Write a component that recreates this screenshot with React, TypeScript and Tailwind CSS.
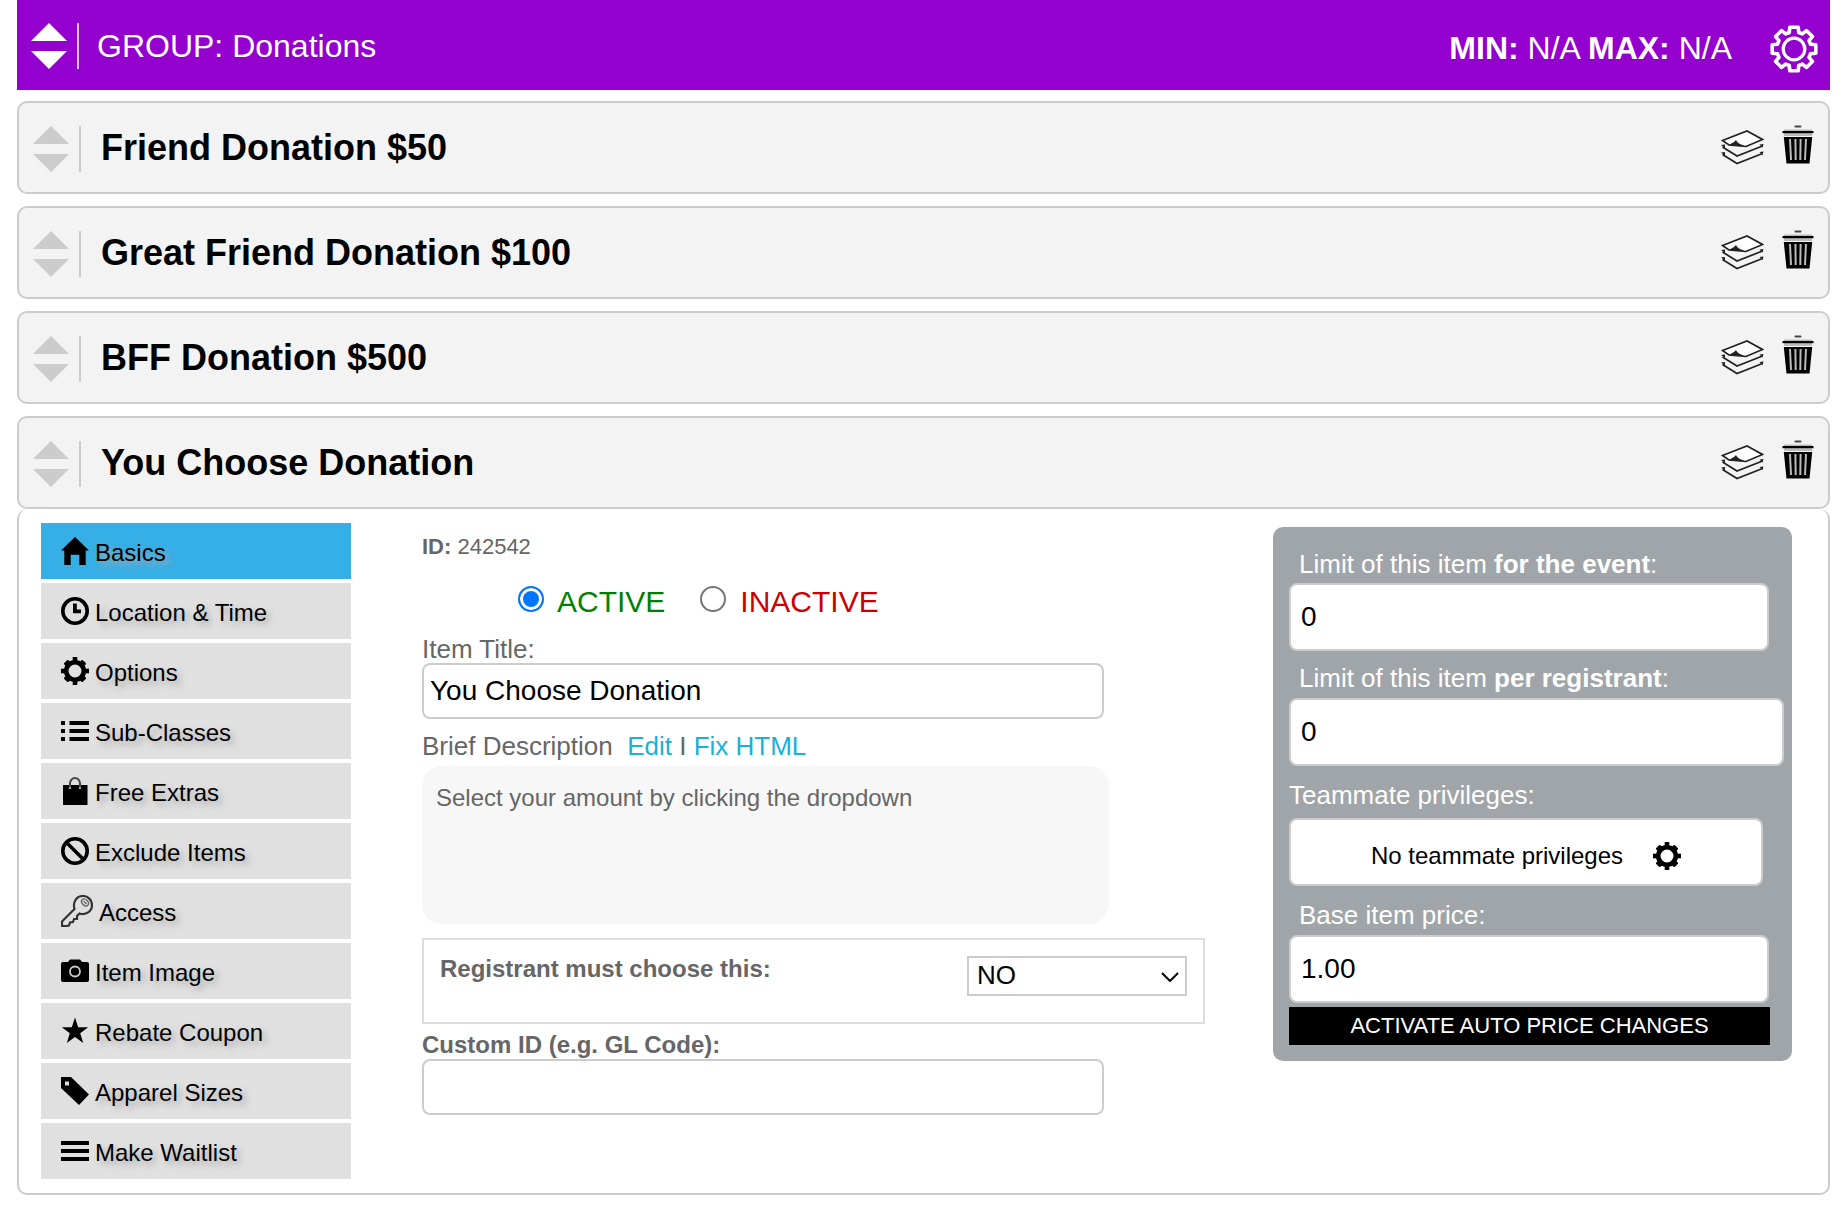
import { useState } from 'react';
import type { ReactNode } from 'react';

interface Tab {
  label: string;
  icon: ReactNode;
}

// Outline of the eight-toothed cog, centred on 0,0
const cogOutline = Array.from({ length: 8 }, (_, i) =>
  [[-16, 17.2], [-11, 22.2], [11, 22.2], [16, 17.2]].map(([deg, r]) => {
    const a = ((i * 45 + deg - 90) * Math.PI) / 180;
    return `${(Math.cos(a) * r).toFixed(2)},${(Math.sin(a) * r).toFixed(2)}`;
  }).join(' ')
).join(' ');

function CogOutlineIcon() {
  return (
    <svg viewBox="-24 -24 48 48" className="size-12" fill="none" stroke="white" strokeWidth="3.6" strokeLinejoin="round">
      <polygon points={cogOutline} />
      <circle r="10.8" strokeWidth="3.2" />
    </svg>
  );
}

function GearIcon() {
  return (
    <svg viewBox="0 0 28 28" className="size-7 shrink-0">
      <circle cx="14" cy="14" r="8.8" fill="none" stroke="black" strokeWidth="4.6" />
      {[0, 90, 180, 270].map((deg) => (
        <rect key={deg} x="11.7" y="0" width="4.6" height="5" transform={`rotate(${deg} 14 14)`} />
      ))}
      {[45, 135, 225, 315].map((deg) => (
        <rect key={deg} x="11" y="0.8" width="6" height="5" rx="1" transform={`rotate(${deg} 14 14)`} />
      ))}
    </svg>
  );
}

function LayersIcon() {
  return (
    <svg viewBox="0 0 43 35" className="h-[35px] w-[43px]" fill="none" stroke="#222" strokeWidth="1.7">
      <path d="M1.5 10.5 26 1l15.5 8.5L25 16.5 8 15z" fill="white" />
      <path d="M6.5 15c3.5-1 6.5-2.500 8.500-5 1 3 5 4.500 9.500 6.500z" fill="#222" stroke="none" />
      <path d="M1.500 17L16 26l25.500-10M1.500 24.500L16 33.500l25.500-10" />
      <path d="M0 15l4-.5v3.500zM0 22.500l4-.5v3.500zM42.500 14l-4 .5 3 3zM42.500 21.500l-4 .5 3 3z" fill="#222" stroke="none" />
    </svg>
  );
}

function TrashIcon() {
  return (
    <svg viewBox="0 0 32 39" className="h-[39px] w-8">
      <rect x="12.5" y="0.5" width="7" height="2" rx="1" fill="#444" />
      <rect x="2" y="4.5" width="28" height="6.5" fill="#bbb" />
      <rect x="0.5" y="6" width="31" height="2.2" />
      <path d="M1.8 12h28.4l-2.7 26.5h-23z" />
      <path d="M8 14l1 21M13.4 14l.3 21M18.600 14l-.3 21M24 14l-1 21" stroke="#bbb" strokeWidth="2" />
    </svg>
  );
}

function TabIcon({ children }: { children: ReactNode }) {
  return <svg viewBox="0 0 28 28" className="size-7 shrink-0">{children}</svg>;
}

const tabs: Tab[] = [
  {
    label: 'Basics',
    icon: <TabIcon><path d="M14 0l14 13.5h-3.3V28h-6.4V17.7H9.700V28H3.300V13.500H0z" /></TabIcon>,
  },
  {
    label: 'Location & Time',
    icon: (
      <TabIcon>
        <circle cx="14" cy="14" r="12.2" fill="none" stroke="black" strokeWidth="3.6" />
        <path d="M12 6.5h3.8v6H20v3.800h-8z" />
      </TabIcon>
    ),
  },
  { label: 'Options', icon: <GearIcon /> },
  {
    label: 'Sub-Classes',
    icon: <TabIcon><path d="M0 4h4v4H0zM8.500 4H28v4H8.500zM0 12h4v4H0zM8.500 12H28v4H8.500zM0 20h4v4H0zM8.500 20H28v4H8.500z" /></TabIcon>,
  },
  {
    label: 'Free Extras',
    icon: (
      <TabIcon>
        <path d="M2 8h24.5v20H2z" />
        <path d="M9 11V6.500a5 5.500 0 0 1 10 0V11" fill="none" stroke="#444" strokeWidth="2" />
        <circle cx="9" cy="11" r="1.3" fill="#999" />
        <circle cx="19" cy="11" r="1.3" fill="#999" />
      </TabIcon>
    ),
  },
  {
    label: 'Exclude Items',
    icon: (
      <TabIcon>
        <g fill="none" stroke="black" strokeWidth="3.6">
          <circle cx="14" cy="14" r="12.2" />
          <path d="M5.5 5.500l17 17" />
        </g>
      </TabIcon>
    ),
  },
  {
    label: 'Access',
    icon: (
      <svg viewBox="0 0 32 32" className="size-8 shrink-0" fill="none" stroke="#333" strokeWidth="2.2">
        <path d="M1 26.500L13.500 14C11.500 7 15.500 1 22 1c5 0 9 4 9 9 0 6.500-6 10.500-12.500 8.500L16 21v3h-3l-1 3-3 .5-1 3-3 .5H1z" />
        <ellipse cx="24" cy="7.5" rx="4" ry="2.8" transform="rotate(45 24 7.5)" stroke="#666" strokeWidth="1.4" />
        <path d="M22.500 6l3 3" stroke="#666" strokeWidth="1.2" />
      </svg>
    ),
  },
  {
    label: 'Item Image',
    icon: (
      <TabIcon>
        <path d="M2 5h5l2-2.500h10L21 5h5a2 2 0 0 1 2 2v16a2 2 0 0 1-2 2H2a2 2 0 0 1-2-2V7a2 2 0 0 1 2-2z" />
        <circle cx="14" cy="14.5" r="5" fill="none" stroke="#ccc" strokeWidth="1.8" />
      </TabIcon>
    ),
  },
  {
    label: 'Rebate Coupon',
    icon: <TabIcon><path d="M14 .5l3.200 9.700h10l-8 6 3 9.800-8.200-6-8.200 6 3-9.800-8-6h10z" /></TabIcon>,
  },
  {
    label: 'Apparel Sizes',
    icon: (
      <TabIcon>
        <path d="M0 0h10l18 17.500L18 28 0 11z" />
        <rect x="4" y="4.5" width="4" height="4" fill="#ddd" />
      </TabIcon>
    ),
  },
  {
    label: 'Make Waitlist',
    icon: <TabIcon><path d="M0 4h28v4H0zM0 12h28v4H0zM0 20h28v4H0z" /></TabIcon>,
  },
];

const items = ['Friend Donation $50', 'Great Friend Donation $100', 'BFF Donation $500', 'You Choose Donation'];

function SortHandle() {
  return (
    <button aria-label="Reorder">
      <svg viewBox="0 0 36 46" className="h-[46px] w-9" fill="currentColor">
        <path d="M18 0l18 18H0zM0 28h36L18 46z" />
      </svg>
    </button>
  );
}

function ItemRow({ title }: { title: string }) {
  return (
    <div className="flex h-[93px] items-center rounded-[10px] border-2 border-[#ccc] bg-[#f3f3f3] px-3.5">
      <div className="flex pt-0.5 text-[#ccc]">
        <SortHandle />
        <div className="ml-2.5 w-0.5 bg-[#ccc]" />
      </div>
      <h2 className="ml-5 flex-1 pt-px text-[36px] leading-10 font-bold">{title}</h2>
      <div className="flex items-center gap-[18px] pb-1.5">
        <button aria-label="Duplicate" className="pt-1.5"><LayersIcon /></button>
        <button aria-label="Delete"><TrashIcon /></button>
      </div>
    </div>
  );
}

const limitInput = 'block h-[68px] rounded-lg border-2 border-[#ccc] bg-white px-2.5 text-[28px] text-black';
const textInput = 'block h-14 w-full max-w-[682px] rounded-lg border-2 border-[#ccc] bg-white px-1.5 text-[28px] text-black';
const radio = 'mt-0.5 size-[26px] appearance-none rounded-full border-2 border-[#767676] bg-white checked:border-[#0075ff] checked:bg-[#0075ff] checked:shadow-[inset_0_0_0_3px_white]';

export default function App() {
  const [tab, setTab] = useState('Basics');
  const [active, setActive] = useState(true);

  return (
    <div className="bg-white pr-4 pl-[17px] font-['Liberation_Sans',Arial,sans-serif] text-black">
      <header className="mb-[11px] flex h-[90px] items-center bg-[#9400cd] pr-3 pl-3.5 text-[32px] leading-10 text-white">
        <div className="flex pt-0.5">
          <SortHandle />
          <div className="ml-2.5 w-0.5 bg-[#ccc]" />
        </div>
        <h1 className="ml-[18px] flex-1 pt-0.5">GROUP: Donations</h1>
        <div className="flex items-center gap-[38px] pt-2">
          <p className="pb-0.5"><b>MIN:</b> N/A <b>MAX:</b> N/A</p>
          <button aria-label="Group settings"><CogOutlineIcon /></button>
        </div>
      </header>

      <div className="flex flex-col gap-3">
        {items.map((title) => <ItemRow key={title} title={title} />)}
      </div>

      <main className="flex items-start rounded-[10px] border-2 border-t-0 border-[#ccc] py-3.5 pr-9 pl-[22px] text-[#666]">
        <nav className="flex w-[310px] shrink-0 flex-col gap-1">
          {tabs.map(({ label, icon }) => (
            <button
              key={label}
              onClick={() => setTab(label)}
              className={`flex h-14 items-center gap-1.5 px-5 text-2xl text-black ${tab === label ? 'bg-[#36aee6]' : 'bg-[#e0e0e0]'}`}
            >
              {icon}
              <span className="pt-[3px] [text-shadow:4px_4px_6px_#aaa]">{label}</span>
            </button>
          ))}
        </nav>

        <form className="mr-[68px] ml-[71px] min-w-0 flex-1 pt-2" onSubmit={(e) => e.preventDefault()}>
          <p className="text-[22px] leading-8"><b>ID:</b> 242542</p>

          <div className="mt-[21px] flex gap-[35px] pl-24 text-[30px] leading-9">
            <label className="flex gap-[13px] text-[#008000]">
              <input type="radio" name="status" checked={active} onChange={() => setActive(true)} className={radio} />
              ACTIVE
            </label>
            <label className="flex gap-3.5 text-[#cc0000]">
              <input type="radio" name="status" checked={!active} onChange={() => setActive(false)} className={radio} />
              INACTIVE
            </label>
          </div>

          <label htmlFor="title" className="mt-[15px] block text-[26px] leading-7">Item Title:</label>
          <input id="title" defaultValue="You Choose Donation" className={textInput} />

          <p className="mt-[11px] text-[26px] leading-8">
            Brief Description&nbsp; <a href="#edit" className="text-[#18b1d9]">Edit</a> I <a href="#fix" className="text-[#18b1d9]">Fix HTML</a>
          </p>
          <div className="mt-1 h-[158px] max-w-[687px] rounded-[20px] bg-[#f7f7f7] px-3.5 py-[18px] text-2xl leading-7">
            Select your amount by clicking the dropdown
          </div>

          <div className="mt-3.5 flex h-[86px] items-start justify-between border-2 border-[#ddd] p-4">
            <label htmlFor="required" className="text-2xl leading-[26px] font-bold">Registrant must choose this:</label>
            <div className="relative">
              <select id="required" defaultValue="NO" className="h-10 w-[220px] appearance-none border-2 border-[#ccc] bg-white px-2 pb-0.5 text-[26px] leading-8 text-black">
                <option>NO</option>
                <option>YES</option>
              </select>
              <svg viewBox="0 0 18 10" className="pointer-events-none absolute top-4 right-2 h-2.5 w-[18px]" fill="none" stroke="black" strokeWidth="2">
                <path d="M1 1l8 8 8-8" />
              </svg>
            </div>
          </div>

          <label htmlFor="custom-id" className="mt-[7px] block text-2xl leading-7 font-bold">Custom ID (e.g. GL Code):</label>
          <input id="custom-id" className={textInput} />
        </form>

        <aside className="mt-1 w-[519px] shrink-0 rounded-[10px] bg-[#a0a5a9] pt-[21px] pr-2 pb-4 pl-4 text-[26px] leading-8 text-white">
          <label htmlFor="event-limit" className="mb-[3px] block pl-2.5">Limit of this item <b>for the event</b>:</label>
          <input id="event-limit" defaultValue="0" className={`${limitInput} w-[480px]`} />

          <label htmlFor="registrant-limit" className="mt-[11px] mb-1 block pl-2.5">Limit of this item <b>per registrant</b>:</label>
          <input id="registrant-limit" defaultValue="0" className={`${limitInput} w-full`} />

          <p className="mt-[13px] mb-[7px]">Teammate privileges:</p>
          <button className="flex h-[68px] w-[474px] items-center justify-center gap-[30px] rounded-lg border-2 border-[#ccc] bg-white pt-2 text-2xl text-black">
            No teammate privileges
            <GearIcon />
          </button>

          <label htmlFor="price" className="mt-[13px] mb-1 block pl-2.5">Base item price:</label>
          <input id="price" defaultValue="1.00" className={`${limitInput} w-[480px]`} />
          <button className="mt-1 block h-[38px] w-[481px] bg-black text-[22px] leading-8 text-white">ACTIVATE AUTO PRICE CHANGES</button>
        </aside>
      </main>
    </div>
  );
}
